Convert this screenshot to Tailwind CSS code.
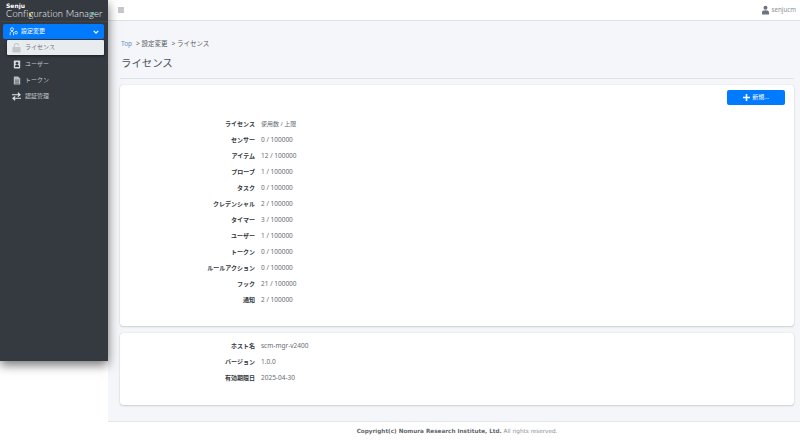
<!DOCTYPE html>
<html lang="ja">
<head>
    <meta charset="UTF-8">
    <title>ライセンス</title>
    <script src="https://cdn.jsdelivr.net/npm/@tailwindcss/browser@4"></script>
</head>
<body class="bg-white overflow-hidden antialiased font-['Noto_Sans','Noto_Sans_CJK_JP',sans-serif] text-[#33383d]">
<div class="flex w-[800px] h-[441px]">
    <!-- sidebar -->
    <aside class="w-[108px] h-[361px] shrink-0 bg-[#343a40] shadow-[0_4px_10px_rgba(0,0,0,0.55)] relative z-10 flex flex-col">
        <div class="h-[22px] pl-[6px] pt-[3px] border-b border-[#3f454b]">
            <div class="text-[6px] leading-[6px] font-bold text-white font-['DejaVu_Sans',sans-serif]">Senju</div>
            <div class="relative text-[9.4px] leading-[9px] text-[#f8f9fa] font-light font-['Lato',sans-serif] tracking-[0.15px] whitespace-nowrap">Configuration Manager
                <span class="absolute left-[23px] top-[4px] w-[2px] h-[3px] rounded-full bg-[#f4d03f]"></span>
                <span class="absolute left-[85px] top-[3px] w-[3px] h-[3px] rounded-full bg-[#48c9b0]"></span>
            </div>
        </div>
        <div class="pl-[3px] pr-[4px] pt-[2px]">
            <div class="h-[15px] bg-[#007bff] rounded-[2px] flex items-center pl-[6px] pr-[5px] text-white text-[6px]">
                <svg class="w-[9px] h-[9px] mr-[3px]" viewBox="0 0 12 12" fill="none" stroke="#dbeafe" stroke-width="1.3"><circle cx="4" cy="3" r="2"/><circle cx="9.5" cy="7.5" r="1.7"/><path d="M1.5 11v-2c0-2 1-3 2.5-3s2 .6 2 2.5V11"/></svg>
                <span class="flex-1">設定変更</span>
                <svg class="w-[6px] h-[6px]" viewBox="0 0 8 8" fill="none" stroke="#fff" stroke-width="1.8"><path d="M1 2.500l3 3 3-3"/></svg>
            </div>
        </div>
        <nav class="flex flex-col pl-[7px] pr-[4px] text-[6px] text-[#c2c7d0]">
            <div class="h-[15px] mt-[1px] bg-[#e9ecef] rounded-[1px] shadow-[0_1px_3px_rgba(0,0,0,0.5)] flex items-center pl-[5px] text-[#6b7278]">
                <svg class="w-[9px] h-[10px] mr-[4px]" viewBox="0 0 10 11" fill="#c3c7cb"><rect x="0.5" y="4.500" width="9" height="6" rx="0.7"/><path d="M2.500 4.500V3a2.500 2.500 0 0 1 5 0" fill="none" stroke="#c3c7cb" stroke-width="1.2"/></svg>
                <span>ライセンス</span>
            </div>
            <div class="h-[16px] mt-[1px] flex items-center pl-[6px]">
                <svg class="w-[8px] h-[9px] mr-[4px]" viewBox="0 0 10 11"><rect x="1" y="0.5" width="8" height="10" rx="0.8" fill="#d5d8dc"/><circle cx="5" cy="4" r="1.6" fill="#343a40"/><path d="M2.500 8.500c0-1.800 1-2.600 2.500-2.600s2.500.8 2.500 2.600z" fill="#343a40"/></svg>
                <span>ユーザー</span>
            </div>
            <div class="h-[16px] flex items-center pl-[6px]">
                <svg class="w-[8px] h-[9px] mr-[4px]" viewBox="0 0 10 11"><path d="M1 .5h5.500L9 3v7.500H1z" fill="#b8bcc1"/><path d="M2.500 5h5M2.500 7h5M2.500 9h5" stroke="#343a40" stroke-width="0.7"/></svg>
                <span>トークン</span>
            </div>
            <div class="h-[17px] flex items-center pl-[5px]">
                <svg class="w-[9px] h-[9px] mr-[4px]" viewBox="0 0 10 10" fill="none" stroke="#e5e7e9" stroke-width="1.200"><path d="M0 3h9M6.500 .8L9 3 6.500 5.200M10 7H1M3.500 4.800L1 7l2.500 2.200"/></svg>
                <span>認証管理</span>
            </div>
        </nav>
    </aside>

    <div class="flex-1 flex flex-col min-w-0">
        <!-- top bar -->
        <header class="h-[21px] shrink-0 bg-white border-b border-[#dee2e6] flex items-center justify-between pl-[10px] pr-[4px]">
            <svg class="w-[6px] h-[6px]" viewBox="0 0 6 6" stroke="#6c757d" stroke-width="0.8"><path d="M0 1h6M0 3h6M0 5h6"/></svg>
            <div class="flex items-center text-[6.200px] text-[#8a9096]">
                <svg class="w-[7px] h-[10px] mr-[3px]" viewBox="0 0 8 10" fill="#6c757d"><circle cx="4" cy="2.500" r="2.300"/><path d="M0 10V7.500C0 6 1.500 5.200 4 5.200S8 6 8 7.500V10z"/></svg>
                <span>senjucm</span>
            </div>
        </header>

        <!-- content -->
        <main class="h-[400px] shrink-0 bg-[#f4f6f9] pl-[12px] pr-[6px] flex flex-col">
            <div class="h-[36px] pt-[18px] text-[6.500px] leading-[10px] text-[#555c63] flex gap-[4px] pl-[1px]">
                <span class="text-[#5a93c4]">Top</span>
                <span>&gt; 設定変更</span>
                <span>&gt; ライセンス</span>
            </div>
            <h1 class="h-[15px] text-[10.400px] leading-[13px] pl-[1px] text-[#4a5056]">ライセンス</h1>
            <div class="border-b border-[#dfe3e8] mt-[6px]"></div>

            <section class="mt-[6px] h-[241px] bg-white rounded-[3px] shadow-[0_0_1px_rgba(0,0,0,0.2),0_1px_2px_rgba(0,0,0,0.15)] relative pt-[31px]">
                <button class="absolute top-[5px] right-[9px] w-[58px] h-[15px] bg-[#007bff] rounded-[2px] text-white text-[6px] flex items-center justify-center gap-[2px]">
                    <svg class="w-[7px] h-[7px]" viewBox="0 0 7 7" stroke="#fff" stroke-width="1.600"><path d="M3.500 0v7M0 3.500h7"/></svg>
                    <span>新規…</span>
                </button>
                <dl class="grid grid-cols-[135px_1fr] gap-x-[6px] auto-rows-[16px] items-center text-[6.500px] leading-[16px]">
                    <dt class="text-right font-bold text-[6px]">ライセンス</dt><dd class="text-[#666c72] text-[6px]">使用数 / 上限</dd>
                    <dt class="text-right font-bold text-[6px]">センサー</dt><dd class="text-[#666c72]">0 / 100000</dd>
                    <dt class="text-right font-bold text-[6px]">アイテム</dt><dd class="text-[#666c72]">12 / 100000</dd>
                    <dt class="text-right font-bold text-[6px]">プローブ</dt><dd class="text-[#666c72]">1 / 100000</dd>
                    <dt class="text-right font-bold text-[6px]">タスク</dt><dd class="text-[#666c72]">0 / 100000</dd>
                    <dt class="text-right font-bold text-[6px]">クレデンシャル</dt><dd class="text-[#666c72]">2 / 100000</dd>
                    <dt class="text-right font-bold text-[6px]">タイマー</dt><dd class="text-[#666c72]">3 / 100000</dd>
                    <dt class="text-right font-bold text-[6px]">ユーザー</dt><dd class="text-[#666c72]">1 / 100000</dd>
                    <dt class="text-right font-bold text-[6px]">トークン</dt><dd class="text-[#666c72]">0 / 100000</dd>
                    <dt class="text-right font-bold text-[6px]">ルールアクション</dt><dd class="text-[#666c72]">0 / 100000</dd>
                    <dt class="text-right font-bold text-[6px]">フック</dt><dd class="text-[#666c72]">21 / 100000</dd>
                    <dt class="text-right font-bold text-[6px]">通知</dt><dd class="text-[#666c72]">2 / 100000</dd>
                </dl>
            </section>

            <section class="mt-[7px] h-[72px] bg-white rounded-[3px] shadow-[0_0_1px_rgba(0,0,0,0.2),0_1px_2px_rgba(0,0,0,0.15)] pt-[5px]">
                <dl class="grid grid-cols-[135px_1fr] gap-x-[6px] auto-rows-[16px] items-center text-[6.500px] leading-[16px]">
                    <dt class="text-right font-bold text-[6px]">ホスト名</dt><dd class="text-[#666c72]">scm-mgr-v2400</dd>
                    <dt class="text-right font-bold text-[6px]">バージョン</dt><dd class="text-[#666c72]">1.0.0</dd>
                    <dt class="text-right font-bold text-[6px]">有効期限日</dt><dd class="text-[#666c72]">2025-04-30</dd>
                </dl>
            </section>
        </main>

        <footer class="flex-1 bg-white border-t border-[#e4e7ea] pl-[6px] text-center text-[5.700px] leading-[19px] text-[#8a9096] font-['DejaVu_Sans',sans-serif]">
            <b class="text-[#5f666d]">Copyright(c) Nomura Research Institute, Ltd.</b> All rights reserved.
        </footer>
    </div>
</div>
</body>
</html>
